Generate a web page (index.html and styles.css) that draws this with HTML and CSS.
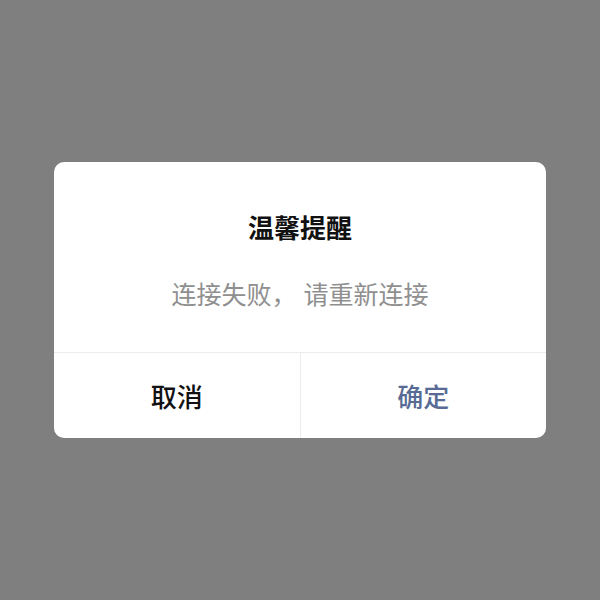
FILE: index.html
```html
<!DOCTYPE html>
<html lang="zh-CN">
<head>
  <meta charset="UTF-8">
  <meta name="viewport" content="width=device-width, initial-scale=1.0">
  <title>温馨提醒</title>
  <link rel="stylesheet" href="styles.css">
</head>
<body>
  <div class="mask">
    <div class="dialog">
      <div class="dialog-body">
        <h2 class="dialog-title">温馨提醒</h2>
        <p class="dialog-msg">连接失败<span class="comma">，</span>请重新连接</p>
      </div>
      <div class="dialog-actions">
        <button class="btn btn-cancel">取消</button>
        <button class="btn btn-ok">确定</button>
      </div>
    </div>
  </div>
</body>
</html>
```

FILE: styles.css
```css
body {
  margin: 0;
  font-family: "Noto Sans CJK SC", "Noto Sans", sans-serif;
  background: #7f7f7f;
}
.mask {
  height: 600px;
  display: flex;
  align-items: center;
  justify-content: center;
}
.dialog {
  width: 492px;
  background: #fff;
  border-radius: 10px;
  overflow: hidden;
}
.dialog-body {
  padding: 47px 24px 41px;
  text-align: center;
}
.dialog-title {
  margin: 0 0 30px;
  font-size: 26px;
  line-height: 36px;
  font-weight: 700;
  color: #111;
}
.dialog-msg {
  margin: 0;
  font-size: 25px;
  line-height: 36px;
  color: #8f8f8f;
}
.dialog-msg .comma {
  display: inline-block;
  width: 32px;
  text-align: left;
}
.dialog-actions {
  display: flex;
  border-top: 1px solid #ececec;
  height: 85px;
}
.btn {
  flex: 1;
  border: none;
  background: none;
  padding: 0;
  font-family: inherit;
  font-size: 26px;
  font-weight: 500;
  cursor: pointer;
}
.btn-cancel {
  color: #111;
  border-right: 1px solid #ececec;
}
.btn-ok {
  color: #576b95;
}
```
